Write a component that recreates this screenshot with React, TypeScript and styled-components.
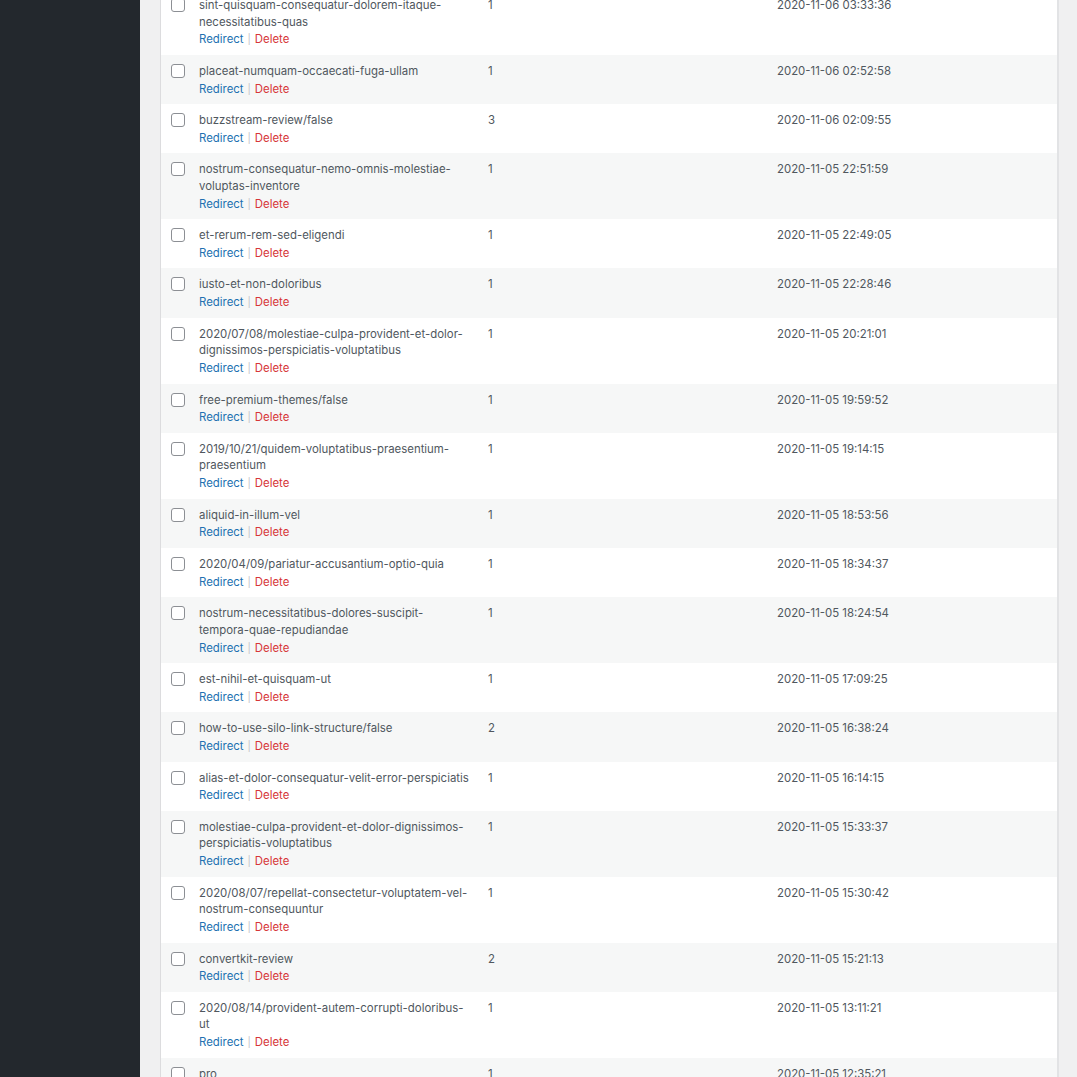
import styled, { createGlobalStyle } from 'styled-components'

const GlobalStyle = createGlobalStyle`
  html, body {
    margin: 0;
    padding: 0;
    background: #f0f0f1;
    overflow: hidden;
  }
  body {
    font-family: Inter, "Liberation Sans", Arial, sans-serif;
  }
`

type Entry = {
  url: string[]
  hits: number
  date: string
}

const entries: Entry[] = [
  { url: ['sint-quisquam-consequatur-dolorem-itaque-', 'necessitatibus-quas'], hits: 1, date: '2020-11-06 03:33:36' },
  { url: ['placeat-numquam-occaecati-fuga-ullam'], hits: 1, date: '2020-11-06 02:52:58' },
  { url: ['buzzstream-review/false'], hits: 3, date: '2020-11-06 02:09:55' },
  { url: ['nostrum-consequatur-nemo-omnis-molestiae-', 'voluptas-inventore'], hits: 1, date: '2020-11-05 22:51:59' },
  { url: ['et-rerum-rem-sed-eligendi'], hits: 1, date: '2020-11-05 22:49:05' },
  { url: ['iusto-et-non-doloribus'], hits: 1, date: '2020-11-05 22:28:46' },
  { url: ['2020/07/08/molestiae-culpa-provident-et-dolor-', 'dignissimos-perspiciatis-voluptatibus'], hits: 1, date: '2020-11-05 20:21:01' },
  { url: ['free-premium-themes/false'], hits: 1, date: '2020-11-05 19:59:52' },
  { url: ['2019/10/21/quidem-voluptatibus-praesentium-', 'praesentium'], hits: 1, date: '2020-11-05 19:14:15' },
  { url: ['aliquid-in-illum-vel'], hits: 1, date: '2020-11-05 18:53:56' },
  { url: ['2020/04/09/pariatur-accusantium-optio-quia'], hits: 1, date: '2020-11-05 18:34:37' },
  { url: ['nostrum-necessitatibus-dolores-suscipit-', 'tempora-quae-repudiandae'], hits: 1, date: '2020-11-05 18:24:54' },
  { url: ['est-nihil-et-quisquam-ut'], hits: 1, date: '2020-11-05 17:09:25' },
  { url: ['how-to-use-silo-link-structure/false'], hits: 2, date: '2020-11-05 16:38:24' },
  { url: ['alias-et-dolor-consequatur-velit-error-perspiciatis'], hits: 1, date: '2020-11-05 16:14:15' },
  { url: ['molestiae-culpa-provident-et-dolor-dignissimos-', 'perspiciatis-voluptatibus'], hits: 1, date: '2020-11-05 15:33:37' },
  { url: ['2020/08/07/repellat-consectetur-voluptatem-vel-', 'nostrum-consequuntur'], hits: 1, date: '2020-11-05 15:30:42' },
  { url: ['convertkit-review'], hits: 2, date: '2020-11-05 15:21:13' },
  { url: ['2020/08/14/provident-autem-corrupti-doloribus-', 'ut'], hits: 1, date: '2020-11-05 13:11:21' },
  { url: ['pro'], hits: 1, date: '2020-11-05 12:35:21' },
]

export default function App() {
  return (
    <>
      <GlobalStyle />
      <Layout>
        <Sidebar />
        <Main>
          <Table>
            {entries.map((entry, i) => (
              <Row key={entry.date + i} $striped={i % 2 === 1}>
                <CheckCell>
                  <Checkbox type="checkbox" aria-label="Select entry" />
                </CheckCell>
                <UrlCell>
                  {entry.url.map((line) => (
                    <UrlLine key={line}>{line}</UrlLine>
                  ))}
                  <Actions>
                    <ActionLink href="#">Redirect</ActionLink>
                    <Sep>|</Sep>
                    <ActionLink href="#" $danger>
                      Delete
                    </ActionLink>
                  </Actions>
                </UrlCell>
                <Cell>{entry.hits}</Cell>
                <Cell>{entry.date}</Cell>
              </Row>
            ))}
          </Table>
        </Main>
      </Layout>
    </>
  )
}

const Layout = styled.div`
  display: grid;
  grid-template-columns: 140px 1fr;
  height: 1077px;
  overflow: hidden;
`

const Sidebar = styled.div`
  background: #23282d;
`

const Main = styled.div`
  padding: 0 18px 0 20px;
  margin-top: -11px;
`

const Table = styled.div`
  display: flex;
  flex-direction: column;
  border-left: 1px solid #dcdcde;
  border-right: 2px solid #e2e3e5;
  background: #fff;
`

const Row = styled.div<{ $striped: boolean }>`
  display: grid;
  grid-template-columns: 38px 289px 289px 1fr;
  padding: 8px 0 7px;
  background: ${({ $striped }) => ($striped ? '#f6f7f7' : '#fff')};
  font-size: 11.4px;
  line-height: 16.5px;
  color: #50575e;
`

const CheckCell = styled.div`
  padding: 1px 0 0 10px;
`

const Checkbox = styled.input`
  appearance: none;
  margin: 0;
  display: block;
  width: 14px;
  height: 14px;
  border: 1px solid #8c8f94;
  border-radius: 3px;
  background: #fff;
  box-sizing: border-box;
`

const UrlCell = styled.div`
  display: flex;
  flex-direction: column;
`

const UrlLine = styled.span`
  white-space: nowrap;
`

const Actions = styled.div`
  display: flex;
  align-items: center;
  gap: 4px;
  margin-top: 1.3px;
`

const ActionLink = styled.a<{ $danger?: boolean }>`
  color: ${({ $danger }) => ($danger ? '#d63638' : '#2271b1')};
  text-decoration: none;
`

const Sep = styled.span`
  color: #c3c4c7;
  font-size: 10px;
`

const Cell = styled.div`
  white-space: nowrap;
`
